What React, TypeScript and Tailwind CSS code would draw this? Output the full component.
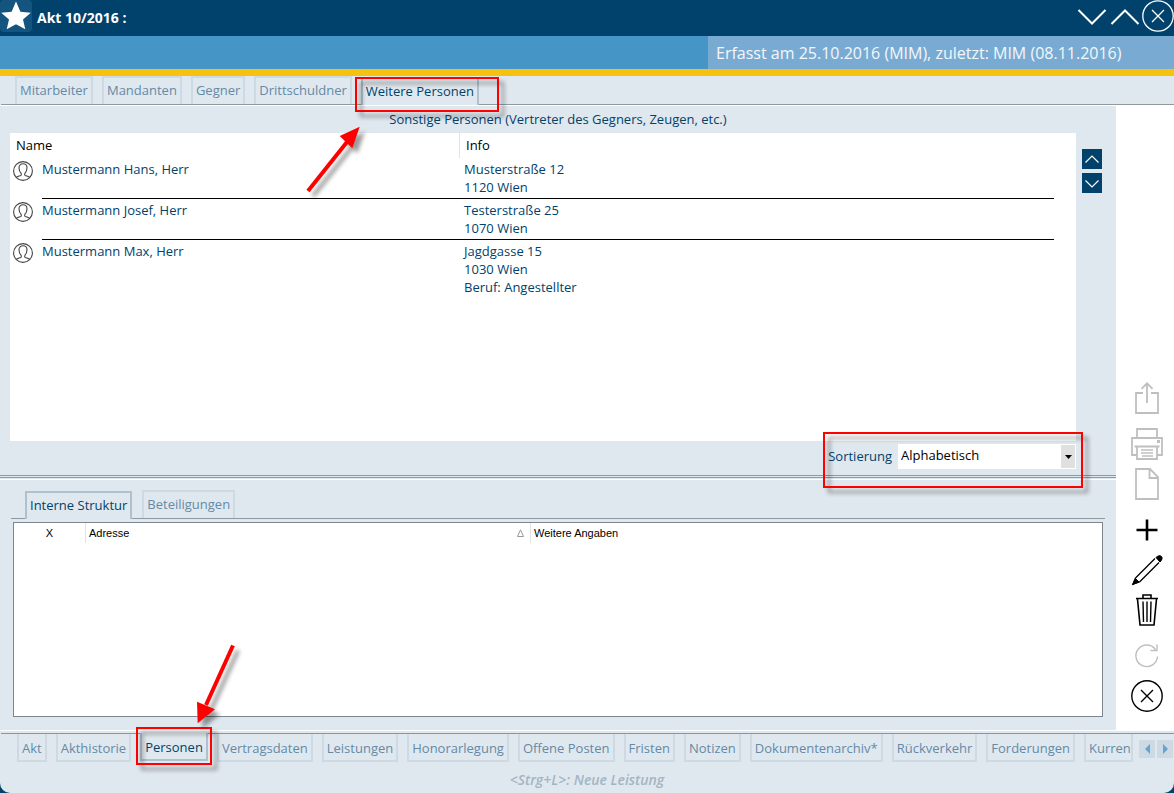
import React, { useState } from 'react';
import clsx from 'clsx';

interface TabProps {
  label: string;
  active: boolean;
  side: 'top' | 'bottom';
  last?: boolean;
  onClick: () => void;
}

const persons = [
  { name: 'Mustermann Hans, Herr', info: ['Musterstraße 12', '1120 Wien'] },
  { name: 'Mustermann Josef, Herr', info: ['Testerstraße 25', '1070 Wien'] },
  { name: 'Mustermann Max, Herr', info: ['Jagdgasse 15', '1030 Wien', 'Beruf: Angestellter'] },
];

const personTabs = ['Mitarbeiter', 'Mandanten', 'Gegner', 'Drittschuldner', 'Weitere Personen'];
const detailTabs = ['Interne Struktur', 'Beteiligungen'];
const fileTabs = [
  'Akt', 'Akthistorie', 'Personen', 'Vertragsdaten', 'Leistungen', 'Honorarlegung', 'Offene Posten',
  'Fristen', 'Notizen', 'Dokumentenarchiv*', 'Rückverkehr', 'Forderungen', 'Kurrentien',
];

const Tab: React.FC<TabProps> = ({ label, active, side, last, onClick }) => (
  <button
    type="button"
    onClick={onClick}
    className={clsx(
      'h-7 border-2 bg-[#e0e8ef] px-[3px] text-left whitespace-nowrap',
      side === 'top' ? 'border-b-0 pb-[2px]' : 'border-t-0 pt-[2px]',
      active ? 'border-[#afc0ce] text-[#00426b]' : 'border-[#cdd9e3] text-[#648aa6]',
      active && (side === 'top' ? '-mb-px' : '-mt-px'),
      last ? 'min-w-0 overflow-hidden' : 'shrink-0'
    )}
  >
    {label}
  </button>
);

// red frame used to point at a control
const Marker: React.FC<{ className: string }> = ({ className }) => (
  <div
    className={clsx(
      'pointer-events-none absolute z-10 border-2 border-[#ff0000] drop-shadow-[5px_5px_2px_rgba(0,0,0,0.45)]',
      className
    )}
  />
);

const PersonIcon = () => (
  <svg className="block h-5 w-5" viewBox="0 0 20 20" fill="none" stroke="#444" strokeWidth="1.1">
    <circle cx="10" cy="10" r="9.4" />
    <path d="M3.2 16.4c1-1 3-1.300 4.600-2 .7-.4.700-1.400.2-2.200C6.600 10.700 6 9 6 6.800 6 4.300 7.700 2.800 10 2.800s4 1.500 4 4c0 2.200-.6 3.900-2 5.400-.5.800-.5 1.800.2 2.200 1.600.7 3.600 1 4.600 2" />
  </svg>
);

const SideButton: React.FC<{ label: string; muted?: boolean; className?: string; children: React.ReactNode }> = ({
  label, muted, className, children,
}) => (
  <button type="button" aria-label={label} className={clsx('h-8 w-8', muted ? 'text-[#bfbfbf]' : 'text-black', className)}>
    <svg className="block h-8 w-8" viewBox="0 0 32 32" fill="none" stroke="currentColor">
      {children}
    </svg>
  </button>
);

const Sidebar = () => (
  <aside className="flex w-[58px] shrink-0 flex-col items-center justify-end gap-2 bg-white pb-[18px] pl-1">
    <SideButton label="Exportieren" muted>
      <path d="M12 11H5v20h22V11h-7M16 21V1.500M10.500 6.800 16 1.300l5.500 5.500" strokeWidth="1.800" />
    </SideButton>
    <SideButton label="Drucken" muted className="mt-[6px]">
      <g strokeWidth="1.800">
        <path d="M6 10V1h20v9M6 27H1V10h30v17h-5" />
        <path d="M6 18.500h20V31H6zM3.500 18.500h25" />
        <path d="M10 22h12M10 25h12M11 28h11" strokeWidth="1.500" />
      </g>
      <path d="M26 12h3v3h-3z" fill="currentColor" stroke="none" />
    </SideButton>
    <SideButton label="Neues Dokument" muted>
      <path d="M5 1h14l8 8v22H5zM18.500 1v9H27" strokeWidth="1.800" />
    </SideButton>
    <SideButton label="Hinzufügen" className="mt-[6px]">
      <path d="M16 5.500v21M5.500 16h21" strokeWidth="2.600" />
    </SideButton>
    <SideButton label="Bearbeiten">
      <path d="M4.500 24 24 4.500M8.500 28 28 8.500M4.500 24 2 30l6.500-2" strokeWidth="1.300" />
      <path d="M4.500 24.500 1.500 30.700 8 28zM25 3.500c2-2 4.500-2.300 5.500-1 1.200 1.400.5 3.500-1.500 5.500z" fill="currentColor" />
    </SideButton>
    <SideButton label="Löschen">
      <path d="M5 4.500h22M12 4V1h8v3M6.500 5 9 31h14l2.500-26" strokeWidth="1.600" />
      <path d="M12 7.500l.5 20.500M16 7.500V28M20 7.500 19.500 28" strokeWidth="1.400" />
    </SideButton>
    <SideButton label="Aktualisieren" muted className="mt-[6px]">
      <path d="M26.500 16.500A10.800 10.800 0 1 1 24.500 9.500M26 4.500v6h-6.500" strokeWidth="1.400" />
    </SideButton>
    <SideButton label="Schließen">
      <circle cx="16" cy="16" r="15.200" strokeWidth="1.400" />
      <path d="m10 10 12 12M22 10 10 22" strokeWidth="1.400" />
    </SideButton>
  </aside>
);

const App: React.FC = () => {
  const [personTab, setPersonTab] = useState('Weitere Personen');
  const [detailTab, setDetailTab] = useState('Interne Struktur');
  const [fileTab, setFileTab] = useState('Personen');
  const [sorting, setSorting] = useState('Alphabetisch');

  return (
    <div className="relative flex min-h-screen flex-col bg-[#00426b] font-['Open_Sans','Noto_Sans',sans-serif] text-[13px] leading-[18px] text-[#00426b]">
      <header>
        <div className="flex h-9 items-center justify-between text-white">
          <div className="flex h-9 items-center gap-[5px]">
            <div className="h-8 w-8 self-start rounded bg-[#14557f]">
              <svg className="block h-8 w-8" viewBox="0 0 32 32" fill="#fff">
                <path d="M16 1.500 20.400 11.700 30.800 12.800 23 19.600 25.300 29.300 16 24.200 6.700 29.300 9 19.600 1.200 12.800 11.600 11.700z" />
              </svg>
            </div>
            <h1 className="text-[14px] font-bold">Akt 10/2016 :</h1>
          </div>
          <div className="flex h-8 gap-px self-start">
            <button type="button" aria-label="Nächster Akt">
              <svg className="block h-8 w-8" viewBox="0 0 32 32" fill="none" stroke="#fff" strokeWidth="2">
                <path d="M2.500 10 16 23.500 29.500 10" />
              </svg>
            </button>
            <button type="button" aria-label="Voriger Akt">
              <svg className="block h-8 w-8" viewBox="0 0 32 32" fill="none" stroke="#fff" strokeWidth="2">
                <path d="M2.500 24 16 10.500 29.500 24" />
              </svg>
            </button>
            <button type="button" aria-label="Fenster schließen">
              <svg className="block h-8 w-8" viewBox="0 0 32 32" fill="none" stroke="#fff" strokeWidth="1.300">
                <circle cx="16" cy="16" r="15.200" />
                <path d="m10 10 12 12M22 10 10 22" />
              </svg>
            </button>
          </div>
        </div>
        <div className="flex h-[33px] justify-end bg-[#4596c6]">
          <div className="flex w-[466px] items-center bg-[#79abd2] px-2 text-[16px] text-[#f2f7fb]">
            Erfasst am 25.10.2016 (MIM), zuletzt: MIM (08.11.2016)
          </div>
        </div>
        <div className="h-[7px] bg-[#f7c110]" />
      </header>

      <div className="flex flex-1 flex-col rounded-b-[10px] bg-[#e0e8ef]">
        <nav className="ml-px flex items-end gap-[9px] border-b border-[#8f9a9c] pl-[14px]">
          {personTabs.map((label) => (
            <div key={label} className="relative flex items-end">
              <Tab label={label} side="top" active={label === personTab} onClick={() => setPersonTab(label)} />
              {label === 'Weitere Personen' && <Marker className="top-0 -right-5 -bottom-2 -left-[6px]" />}
            </div>
          ))}
        </nav>

        <div className="flex flex-1 border-y border-white">
          <main className="flex min-w-0 flex-1 flex-col">
            <h2 className="pt-1 pb-[5px] text-center">Sonstige Personen (Vertreter des Gegners, Zeugen, etc.)</h2>

            <section className="flex gap-[6px] pr-[14px] pl-[10px]">
              <div className="h-[308px] flex-1 bg-white pr-[22px]">
                <table className="w-full table-fixed border-separate border-spacing-0 text-left">
                  <colgroup>
                    <col className="w-8" />
                    <col className="w-[417px]" />
                    <col />
                  </colgroup>
                  <thead className="text-black">
                    <tr className="h-[25px]">
                      <th colSpan={2} className="pt-0 pb-[2px] pl-[6px] font-normal">Name</th>
                      <th className="border-l border-[#e2e2e2] pt-0 pb-[2px] pl-[6px] font-normal">Info</th>
                    </tr>
                  </thead>
                  <tbody>
                    {persons.map((person, index) => {
                      const line = index < persons.length - 1 && 'border-b border-black';
                      return (
                        <tr key={person.name} className="align-top">
                          <td className="pt-[3px] pl-[3px]"><PersonIcon /></td>
                          <td className={clsx('py-[2px]', line)}>{person.name}</td>
                          <td className={clsx('py-[2px] pl-[5px]', line)}>
                            {person.info.map((row) => <div key={row}>{row}</div>)}
                          </td>
                        </tr>
                      );
                    })}
                  </tbody>
                </table>
              </div>
              <div className="flex w-5 flex-col gap-1 pt-4">
                <button type="button" aria-label="Nach oben" className="h-5 w-5 bg-[#00426b]">
                  <svg className="block h-5 w-5" viewBox="0 0 20 20" fill="none" stroke="#fff" strokeWidth="1.200">
                    <path d="M3.500 13.500 10 7l6.500 6.500" />
                  </svg>
                </button>
                <button type="button" aria-label="Nach unten" className="h-5 w-5 bg-[#00426b]">
                  <svg className="block h-5 w-5" viewBox="0 0 20 20" fill="none" stroke="#fff" strokeWidth="1.200">
                    <path d="M3.500 7.500 10 14l6.500-6.500" />
                  </svg>
                </button>
              </div>
            </section>

            <div className="flex justify-end pt-[3px] pr-10 pb-[6px]">
              <div className="relative flex items-center gap-[6px]">
                <label htmlFor="sorting" className="pb-[2px]">Sortierung</label>
                <div className="relative">
                  <select
                    id="sorting"
                    value={sorting}
                    onChange={(e) => setSorting(e.target.value)}
                    className="block h-[25px] w-[178px] appearance-none bg-white pr-4 pb-1 pl-[3px] text-black"
                  >
                    <option>Alphabetisch</option>
                    <option>Manuell</option>
                  </select>
                  <div className="pointer-events-none absolute top-px right-px flex h-[23px] w-[14px] items-center justify-center bg-[#e0e0e0]">
                    <svg className="h-1 w-[7px]" viewBox="0 0 7 4"><path d="M0 0h7L3.500 4z" /></svg>
                  </div>
                </div>
                <Marker className="-top-3 -right-[7px] -bottom-[19px] -left-[5px]" />
              </div>
            </div>

            <div className="h-[5px] border-y border-t-[#8f9a9c] border-b-white">
              <div className="mt-px h-px bg-[#8f9a9c]" />
            </div>

            <section className="flex flex-1 flex-col pt-[10px] pb-[13px]">
              <div className="mr-[11px] ml-[11px] flex items-end gap-[10px] border-b border-[#8f9a9c] pl-[14px]">
                {detailTabs.map((label) => (
                  <Tab key={label} label={label} side="top" active={label === detailTab} onClick={() => setDetailTab(label)} />
                ))}
              </div>
              <div className="mt-[3px] mr-[13px] ml-[13px] flex-1 border border-[#7d8590] bg-white font-['Liberation_Sans',Arial,sans-serif] text-[11px] text-black">
                <table className="w-full table-fixed border-separate border-spacing-0 text-left">
                  <colgroup>
                    <col className="w-[71px]" />
                    <col className="w-[445px]" />
                    <col />
                  </colgroup>
                  <thead>
                    <tr className="h-5">
                      <th className="p-0 text-center font-normal">X</th>
                      <th className="border-l border-[#e2e2e2] p-0 pl-[3px] font-normal">
                        <div className="flex items-center justify-between pr-[6px]">
                          Adresse
                          <svg className="h-2 w-[7px]" viewBox="0 0 7 8" fill="none" stroke="#8c8c8c" strokeWidth="0.900">
                            <path d="M3.500.8.500 7.500h6z" />
                          </svg>
                        </div>
                      </th>
                      <th className="border-l border-[#e2e2e2] p-0 pl-[3px] font-normal">Weitere Angaben</th>
                    </tr>
                  </thead>
                  <tbody />
                </table>
              </div>
            </section>
          </main>
          <Sidebar />
        </div>

        <footer className="pt-[2px]">
          <div className="ml-px flex items-start border-t border-[#8b959e]">
            <nav className="flex min-w-0 flex-1 items-start gap-[9px] pl-4">
              {fileTabs.map((label, index) => {
                const last = index === fileTabs.length - 1;
                return (
                  <div key={label} className={clsx('relative flex items-start', last ? 'min-w-0' : 'shrink-0')}>
                    <Tab label={label} side="bottom" last={last} active={label === fileTab} onClick={() => setFileTab(label)} />
                    {label === 'Personen' && <Marker className="-top-[7px] -right-1 -bottom-1 -left-1" />}
                  </div>
                );
              })}
            </nav>
            <div className="mt-[6px] mr-px ml-[6px] flex gap-[2px]">
              <button type="button" aria-label="Zurück blättern" className="flex h-[18px] w-4 items-center justify-center bg-[#cdd9e3]">
                <svg className="h-[10px] w-[5px]" viewBox="0 0 5 10" fill="#65a4d1"><path d="M5 0v10L0 5z" /></svg>
              </button>
              <button type="button" aria-label="Weiter blättern" className="flex h-[18px] w-4 items-center justify-center bg-[#cdd9e3]">
                <svg className="h-[10px] w-[5px]" viewBox="0 0 5 10" fill="#65a4d1"><path d="M0 0v10l5-5z" /></svg>
              </button>
            </div>
          </div>
          <p className="pt-[9px] pb-1 text-center text-[14px] font-semibold text-[#a3b5c3] italic">&lt;Strg+L&gt;: Neue Leistung</p>
        </footer>
      </div>

      {/* arrows pointing at the marked tabs */}
      <svg
        className="pointer-events-none absolute top-[120px] left-[300px] z-10 h-20 w-[70px] drop-shadow-[5px_5px_2px_rgba(0,0,0,0.4)]"
        viewBox="0 0 70 80"
      >
        <path d="M8 71 47 22" stroke="#ff0000" strokeWidth="4" />
        <path d="M59.700 6.700 39.700 16 52.300 28.300z" fill="#ff0000" />
      </svg>
      <svg
        className="pointer-events-none absolute bottom-[63px] left-[190px] z-10 h-[90px] w-[60px] drop-shadow-[5px_5px_2px_rgba(0,0,0,0.4)]"
        viewBox="0 0 60 90"
      >
        <path d="M43 5.500 16 65" stroke="#ff0000" strokeWidth="4" />
        <path d="M7.700 83.300 7 61.700 25 69.300z" fill="#ff0000" />
      </svg>
    </div>
  );
};

export default App;
